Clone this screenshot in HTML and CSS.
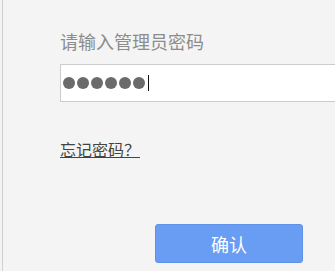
FILE: index.html
```html
<!DOCTYPE html>
<html lang="zh-CN">
<head>
    <meta charset="UTF-8">
    <title>管理员登录</title>
    <link rel="stylesheet" href="styles.css">
</head>
<body>
    <div class="panel">
        <div class="label">请输入管理员密码</div>
        <div class="password-box">
            <span class="dot"></span>
            <span class="dot"></span>
            <span class="dot"></span>
            <span class="dot"></span>
            <span class="dot"></span>
            <span class="dot"></span>
            <span class="caret"></span>
        </div>
        <a class="forgot" href="#">忘记密码？</a>
        <div class="actions">
            <button class="confirm">确认</button>
        </div>
    </div>
</body>
</html>
```

FILE: styles.css
```css
body {
    margin: 0;
    background-color: #f4f4f4;
    font-family: "Noto Sans CJK SC", "Liberation Sans", sans-serif;
    overflow: hidden;
}

.panel {
    margin-left: 2px;
    border-left: 1px solid #cfcfcf;
    height: 271px;
    padding-left: 57px;
    box-sizing: border-box;
}

.label {
    padding-top: 28px;
    font-size: 18px;
    line-height: 26px;
    color: #8c8c8c;
}

/* field is cut off by the right edge of the window */
.password-box {
    margin-top: 10px;
    height: 38px;
    width: 275px;
    box-sizing: border-box;
    border: 1px solid #cccccc;
    border-right: none;
    background-color: #fff;
    display: flex;
    align-items: center;
    gap: 2px;
    padding-left: 2px;
}

.dot {
    width: 12px;
    height: 12px;
    border-radius: 50%;
    background-color: #6b6b6b;
}

.caret {
    width: 1px;
    height: 16px;
    background-color: #111;
    margin-left: 1px;
}

.forgot {
    display: inline-block;
    margin-top: 36px;
    font-size: 16px;
    line-height: 22px;
    color: #444;
    text-decoration: underline;
}

.actions {
    padding-left: 95px;
    margin-top: 63px;
}

.confirm {
    width: 148px;
    height: 39px;
    border: 1px solid #5f91e6;
    border-radius: 3px;
    background-color: #699df3;
    color: #fff;
    font-family: inherit;
    font-size: 18px;
    cursor: pointer;
}
```
